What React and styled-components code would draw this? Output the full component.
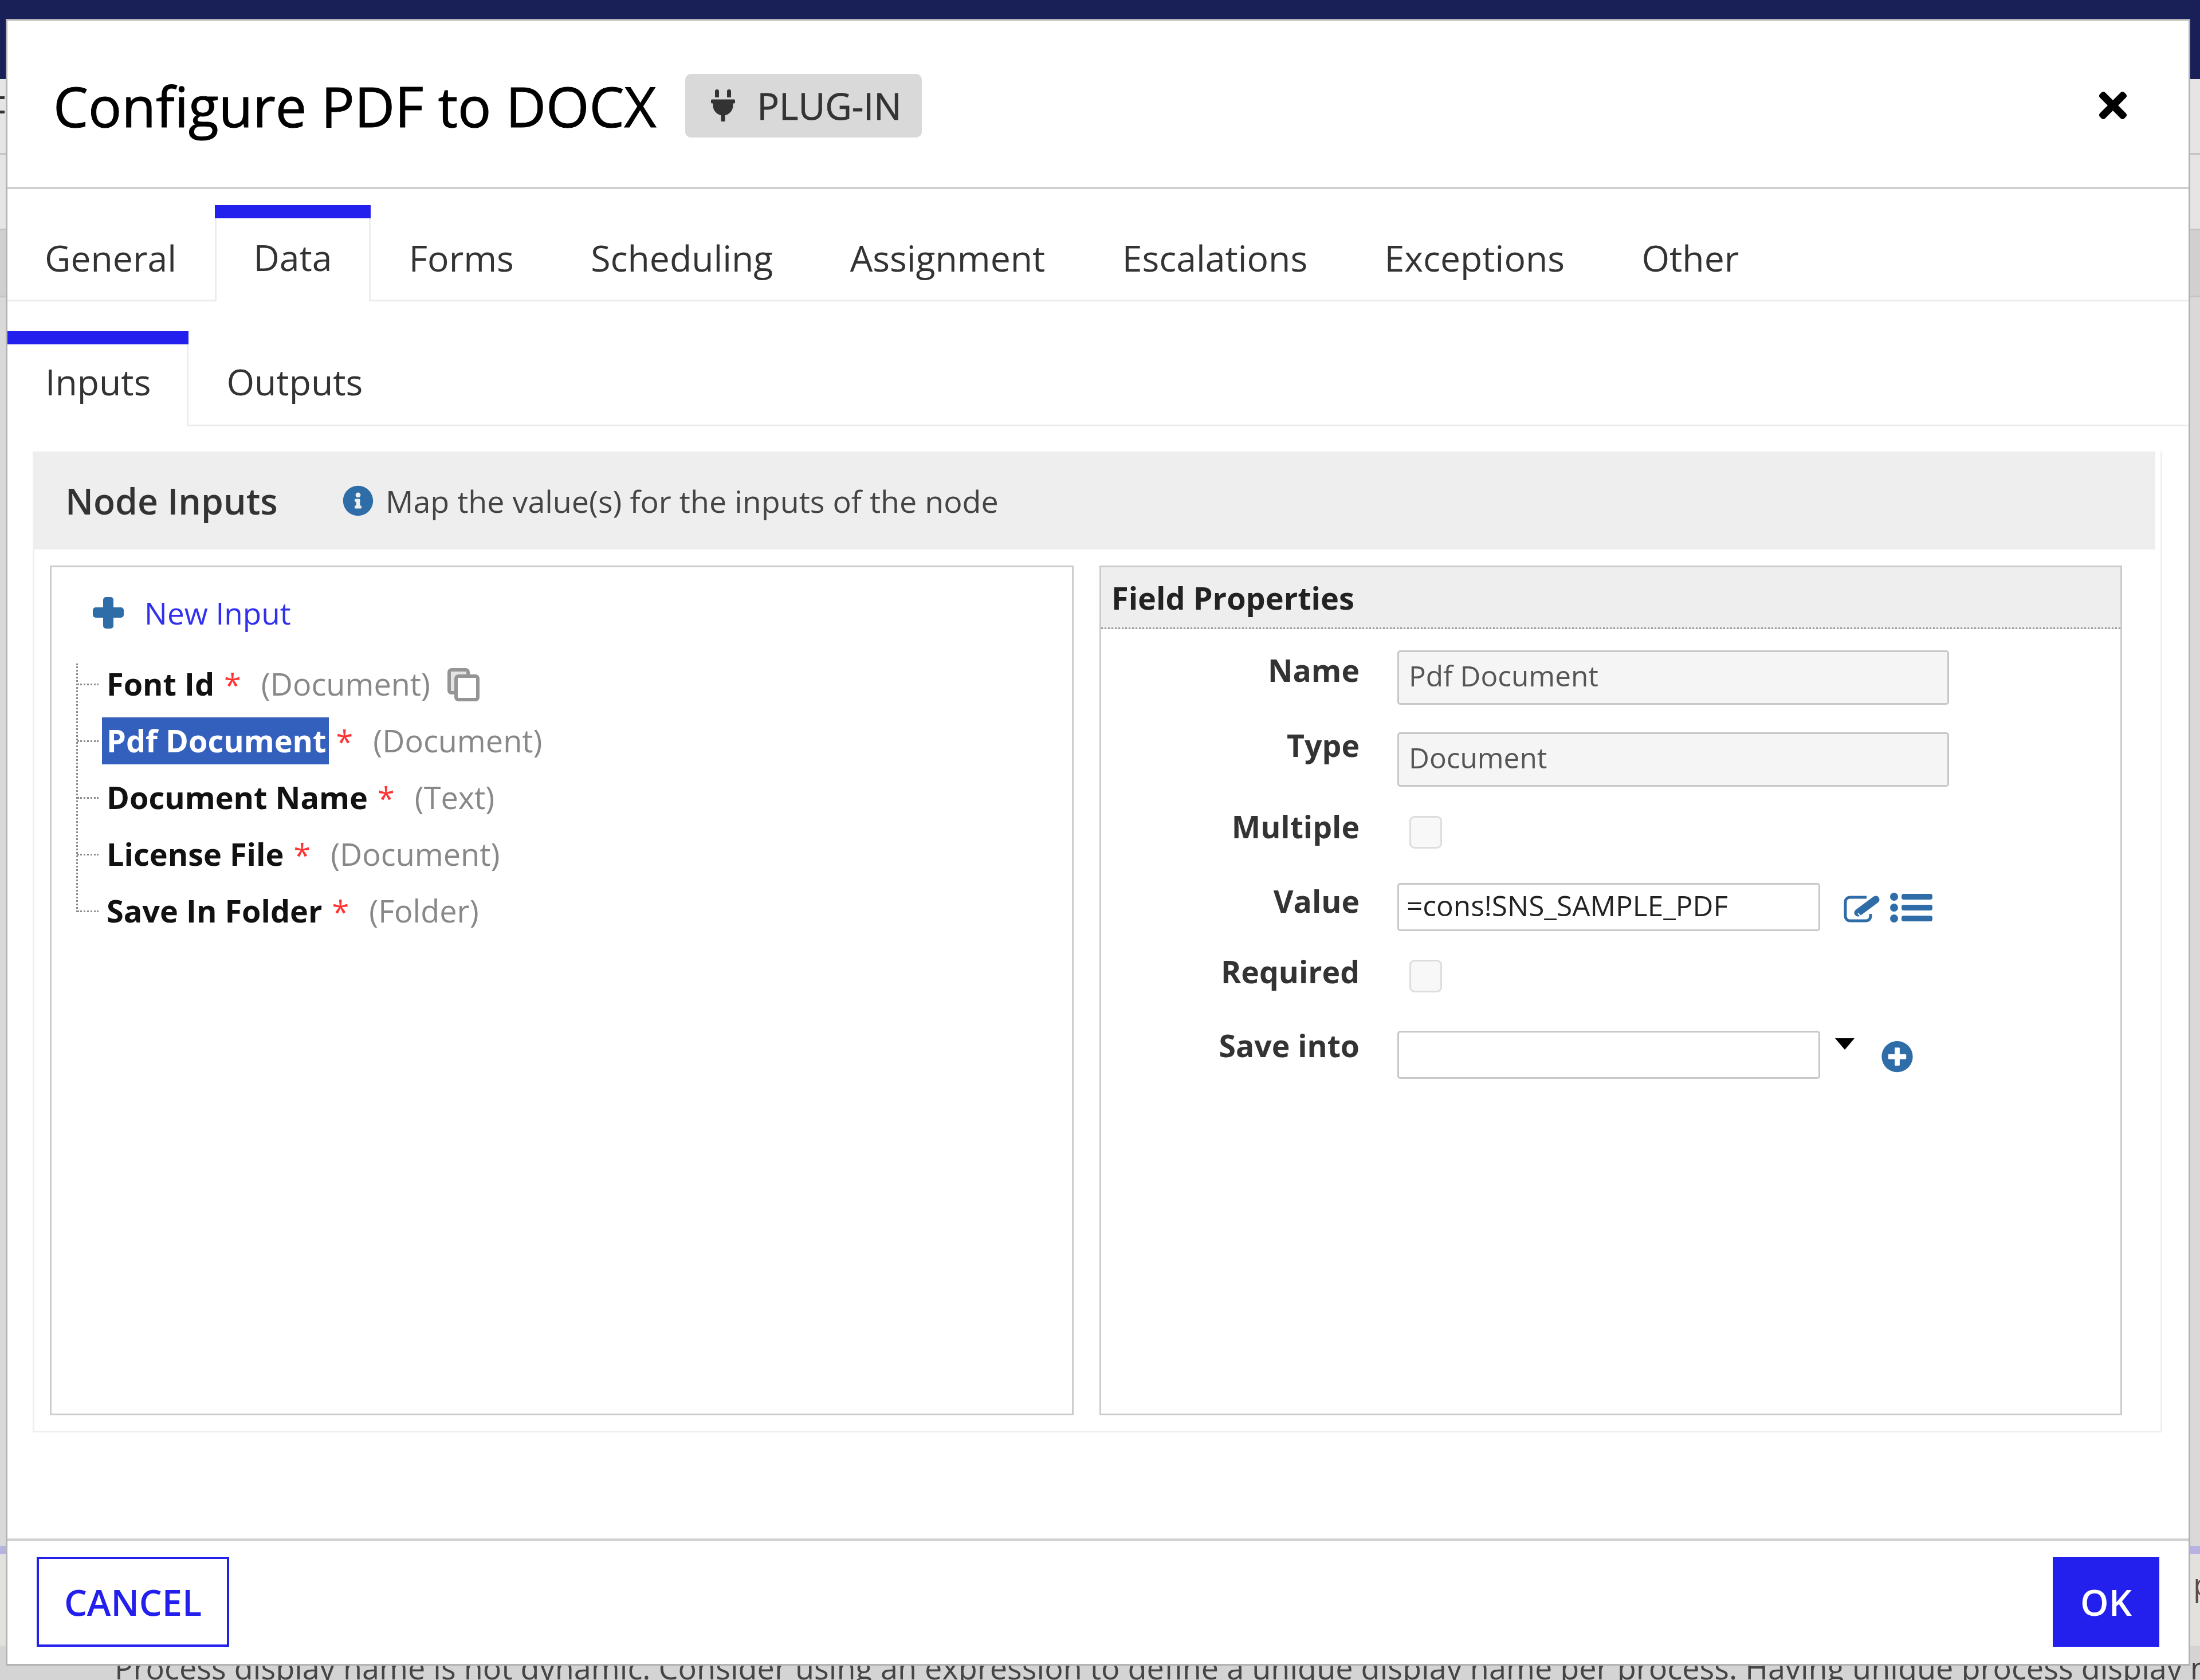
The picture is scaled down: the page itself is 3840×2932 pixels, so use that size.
import React from "react";
import styled, { createGlobalStyle } from "styled-components";
import { FaPlug, FaTimes, FaInfoCircle, FaPlusCircle } from "react-icons/fa";

const BLUE = "#2320ee";
const ICON = "#2e6da8";

const TABS = ["General", "Data", "Forms", "Scheduling", "Assignment", "Escalations", "Exceptions", "Other"];

const INPUTS = [
  { name: "Font Id", type: "(Document)", copy: true },
  { name: "Pdf Document", type: "(Document)", selected: true },
  { name: "Document Name", type: "(Text)" },
  { name: "License File", type: "(Document)" },
  { name: "Save In Folder", type: "(Folder)" },
];

function CopyIcon() {
  return (
    <CopySvg viewBox="0 0 56 58" stroke="#959595" strokeWidth="6">
      <path d="M36 13V7a4 4 0 0 0-4-4H7a4 4 0 0 0-4 4v32a4 4 0 0 0 4 4h6z" fill="#e4e4e4" />
      <rect x="15" y="14" width="38" height="41" rx="4" fill="#fff" />
    </CopySvg>
  );
}

function PlusIcon() {
  return (
    <PlusSvg viewBox="0 0 54 55" fill={ICON}>
      <rect x="18" y="0" width="18" height="55" rx="5" />
      <rect x="0" y="18" width="54" height="18" rx="5" />
    </PlusSvg>
  );
}

function EditIcon() {
  return (
    <EditSvg viewBox="0 0 65 48">
      <path
        d="M40 4H11a8 8 0 0 0-8 8v25a8 8 0 0 0 8 8h28a8 8 0 0 0 8-8V33"
        fill="none"
        stroke={ICON}
        strokeWidth="5"
      />
      <path d="M25 31 L56 8" stroke={ICON} strokeWidth="13" strokeLinecap="round" />
      <path d="M25 32 L31 38" stroke="#fff" strokeWidth="2" />
    </EditSvg>
  );
}

function ListIcon() {
  return (
    <ListSvg viewBox="0 0 74 52" fill={ICON}>
      <circle cx="7" cy="7" r="7" />
      <circle cx="7" cy="26" r="7" />
      <circle cx="7" cy="45" r="7" />
      <rect x="20" y="2" width="54" height="10" rx="4" />
      <rect x="20" y="21" width="54" height="10" rx="4" />
      <rect x="20" y="40" width="54" height="10" rx="4" />
    </ListSvg>
  );
}

export default function App() {
  return (
    <Page>
      <GlobalStyle />
      <TopBar />
      <Strip>
        <MenuDash />
        <MenuDash />
      </Strip>
      <Strip />
      <Strip $dim />
      <PageFill />
      <LavenderBar />
      <NoticeBand>process</NoticeBand>
      <BottomBand>
        Process display name is not dynamic. Consider using an expression to define a unique display name per process. Having unique process display name
      </BottomBand>

      <Modal>
        <Header>
          <TitleGroup>
            <Title>Configure PDF to DOCX</Title>
            <Badge>
              <FaPlug />
              PLUG-IN
            </Badge>
          </TitleGroup>
          <CloseIcon />
        </Header>

        <TabBar>
          {TABS.map((t) => (
            <Tab key={t} $active={t === "Data"}>
              {t}
            </Tab>
          ))}
        </TabBar>

        <SubTabBar>
          <SubTab $active>Inputs</SubTab>
          <SubTab>Outputs</SubTab>
        </SubTabBar>

        <Panel>
          <PanelHeader>
            <PanelTitle>Node Inputs</PanelTitle>
            <InfoIcon />
            <PanelHint>Map the value(s) for the inputs of the node</PanelHint>
          </PanelHeader>
          <PanelBody>
            <TreeBox>
              <NewInput>
                <PlusIcon />
                New Input
              </NewInput>
              <Tree>
                {INPUTS.map((row) => (
                  <TreeRow key={row.name}>
                    <Branch />
                    <NodeName $selected={row.selected}>{row.name}</NodeName>
                    <Star>*</Star>
                    <NodeType>{row.type}</NodeType>
                    {row.copy && <CopyIcon />}
                  </TreeRow>
                ))}
              </Tree>
            </TreeBox>

            <PropsBox>
              <PropsHeader>Field Properties</PropsHeader>
              <Field $top={37}>
                <FieldLabel $top={9}>Name</FieldLabel>
                <TextBox $disabled>Pdf Document</TextBox>
              </Field>
              <Field $top={48}>
                <FieldLabel $top={-3}>Type</FieldLabel>
                <TextBox $disabled>Document</TextBox>
              </Field>
              <Field $top={51}>
                <FieldLabel $top={-7}>Multiple</FieldLabel>
                <Check />
              </Field>
              <Field $top={60}>
                <FieldLabel $top={6}>Value</FieldLabel>
                <TextBox $short>=cons!SNS_SAMPLE_PDF</TextBox>
                <EditIcon />
                <ListIcon />
              </Field>
              <Field $top={50}>
                <FieldLabel $top={-5}>Required</FieldLabel>
                <Check />
              </Field>
              <Field $top={67}>
                <FieldLabel $top={0}>Save into</FieldLabel>
                <TextBox $short />
                <Caret />
                <AddIcon />
              </Field>
            </PropsBox>
          </PanelBody>
        </Panel>

        <Footer>
          <CancelButton>CANCEL</CancelButton>
          <OkButton>OK</OkButton>
        </Footer>
      </Modal>
    </Page>
  );
}

const GlobalStyle = createGlobalStyle`
  html, body {
    margin: 0;
    padding: 0;
  }
  body {
    font-family: "Open Sans", "Liberation Sans", sans-serif;
    overflow: hidden;
  }
`;

const Page = styled.div`
  position: relative;
  display: flex;
  flex-direction: column;
  width: 3840px;
  height: 2932px;
  overflow: hidden;
  background: #d9d9d9;
`;
const TopBar = styled.div`
  height: 138px;
  background: #191f57;
`;
const Strip = styled.div`
  box-sizing: border-box;
  height: ${(p) => (p.$dim ? 117 : 132)}px;
  padding-top: 30px;
  background: ${(p) => (p.$dim ? "#d0d0cf" : "#e5e5e5")};
  border-bottom: 3px solid #c4c4c4;
`;
const MenuDash = styled.div`
  width: 8px;
  height: 5px;
  margin-bottom: 20px;
  background: #333;
`;
const PageFill = styled.div`
  flex: 1;
`;
const LavenderBar = styled.div`
  height: 14px;
  background: #b6b2e2;
`;
const NoticeBand = styled.div`
  box-sizing: border-box;
  height: 160px;
  padding: 14px 0 0 3828px;
  background: #e2e1dd;
  color: #5a4a48;
  font-size: 54px;
  line-height: 76px;
  white-space: nowrap;
  overflow: hidden;
`;
const BottomBand = styled.div`
  height: 60px;
  padding-left: 200px;
  background: #d4d4d4;
  color: #444;
  font-size: 54px;
  line-height: 76px;
  white-space: nowrap;
  overflow: hidden;
`;

const Modal = styled.div`
  position: absolute;
  left: 10px;
  top: 33px;
  box-sizing: border-box;
  display: flex;
  flex-direction: column;
  width: 3813px;
  height: 2874px;
  background: #fff;
  border: 3px solid #b4b4b4;
`;

const Header = styled.div`
  box-sizing: border-box;
  flex: none;
  display: flex;
  align-items: center;
  justify-content: space-between;
  height: 294px;
  padding: 6px 103px 0 80px;
  border-bottom: 4px solid #d0d0d0;
`;
const TitleGroup = styled.div`
  display: flex;
  align-items: center;
  gap: 50px;
`;
const Title = styled.h1`
  margin: 0;
  color: #000;
  font-size: 97px;
  font-weight: 400;
  -webkit-text-stroke: 1px #000;
  line-height: 120px;
  white-space: nowrap;
`;
const Badge = styled.div`
  display: flex;
  align-items: center;
  gap: 38px;
  box-sizing: border-box;
  width: 413px;
  height: 111px;
  padding-left: 44px;
  background: #d9d9d9;
  border-radius: 10px;
  color: #333;
  font-size: 64px;
  -webkit-text-stroke: 0.8px #333;
  white-space: nowrap;
  svg {
    width: 44px;
    height: 56px;
  }
`;
const CloseIcon = styled(FaTimes)`
  width: 70px;
  height: 70px;
  margin-right: -6px;
  color: #000;
`;

const TabBar = styled.div`
  box-sizing: border-box;
  flex: none;
  display: flex;
  align-items: flex-end;
  height: 196px;
  border-bottom: 3px solid #ececec;
`;
const Tab = styled.div`
  box-sizing: border-box;
  height: ${(p) => (p.$active ? 168 : 165)}px;
  margin-bottom: ${(p) => (p.$active ? -3 : 0)}px;
  padding: ${(p) => (p.$active ? 23 : 47)}px 67.2px 0;
  color: #333;
  font-size: 62.5px;
  line-height: 90px;
  white-space: nowrap;
  background: #fff;
  border-top: ${(p) => (p.$active ? `23px solid ${BLUE}` : "none")};
  box-shadow: ${(p) => (p.$active ? "inset 3px 0 #ececec, inset -3px 0 #ececec" : "none")};
  &:first-child {
    padding-left: 65px;
  }
`;

const SubTabBar = styled.div`
  box-sizing: border-box;
  flex: none;
  display: flex;
  align-items: flex-end;
  height: 166px;
  margin-top: 52px;
  border-bottom: 3px solid #ececec;
`;
const SubTab = styled.div`
  box-sizing: border-box;
  height: ${(p) => (p.$active ? 166 : 163)}px;
  margin-bottom: ${(p) => (p.$active ? -3 : 0)}px;
  padding: ${(p) => (p.$active ? 20 : 43)}px 66px 0;
  color: #333;
  font-size: 62.5px;
  line-height: 90px;
  background: #fff;
  border-top: ${(p) => (p.$active ? `23px solid ${BLUE}` : "none")};
  box-shadow: ${(p) => (p.$active ? "inset -3px 0 #ececec" : "none")};
`;

const Panel = styled.div`
  box-sizing: border-box;
  flex: none;
  width: 3717px;
  height: 1712px;
  margin: 44px 0 0 44px;
  padding-right: 9px;
  border: 3px solid #efefef;
  border-top: none;
`;
const PanelHeader = styled.div`
  display: flex;
  align-items: center;
  height: 171px;
  padding-left: 54px;
  background: #eee;
`;
const PanelTitle = styled.div`
  width: 484px;
  color: #333;
  font-size: 62.5px;
  font-weight: 600;
  white-space: nowrap;
`;
const InfoIcon = styled(FaInfoCircle)`
  width: 54px;
  height: 54px;
  margin-right: 21px;
  color: ${ICON};
`;
const PanelHint = styled.div`
  color: #444;
  font-size: 53.8px;
  white-space: nowrap;
`;
const PanelBody = styled.div`
  display: flex;
  gap: 45px;
  margin-top: 28px;
  padding-left: 27px;
`;

const TreeBox = styled.div`
  box-sizing: border-box;
  width: 1787px;
  height: 1483px;
  padding: 52px 0 0 72px;
  border: 3px solid #ccc;
`;
const NewInput = styled.div`
  display: flex;
  align-items: center;
  gap: 36px;
  height: 55px;
  color: #3030ee;
  font-size: 53px;
`;
const PlusSvg = styled.svg`
  width: 54px;
  height: 55px;
`;
const Tree = styled.div`
  position: relative;
  margin: 48px 0 0 -29px;
  &::before {
    content: "";
    position: absolute;
    left: 0;
    top: 13px;
    bottom: 48px;
    border-left: 3px dotted #8a8a8a;
  }
`;
const TreeRow = styled.div`
  display: flex;
  align-items: center;
  height: 99px;
  white-space: nowrap;
`;
const Branch = styled.span`
  flex: none;
  width: 37px;
  margin: 0 6px 0 2px;
  border-top: 3px dotted #8a8a8a;
`;
const NodeName = styled.span`
  padding: 0 4px 0 8px;
  height: 82px;
  margin-top: -2px;
  line-height: 80px;
  color: ${(p) => (p.$selected ? "#fff" : "#111")};
  background: ${(p) => (p.$selected ? "#335fbd" : "transparent")};
  font-size: 54px;
  font-weight: 700;
`;
const Star = styled.span`
  margin-left: 13px;
  color: #f33;
  font-size: 54px;
`;
const NodeType = styled.span`
  margin-left: 35px;
  margin-top: -3px;
  color: #888;
  font-size: 54px;
`;
const CopySvg = styled.svg`
  width: 56px;
  height: 58px;
  margin-left: 30px;
`;

const PropsBox = styled.div`
  box-sizing: border-box;
  width: 1785px;
  height: 1483px;
  border: 3px solid #ccc;
`;
const PropsHeader = styled.div`
  box-sizing: border-box;
  height: 108px;
  padding-left: 18px;
  background: #eee;
  border-bottom: 3px dotted #999;
  color: #222;
  font-size: 54px;
  font-weight: 700;
  line-height: 106px;
`;
const Field = styled.div`
  display: flex;
  align-items: flex-start;
  margin-top: ${(p) => p.$top}px;
`;
const FieldLabel = styled.div`
  box-sizing: border-box;
  flex: none;
  width: 451px;
  margin: ${(p) => p.$top}px 66px 0 0;
  color: #333;
  font-size: 53.5px;
  font-weight: 700;
  line-height: 52px;
  text-align: right;
  white-space: nowrap;
`;
const TextBox = styled.div`
  box-sizing: border-box;
  flex: none;
  width: ${(p) => (p.$short ? 738 : 963)}px;
  height: ${(p) => (p.$short ? 84 : 95)}px;
  padding-left: ${(p) => (p.$disabled ? 17 : 13)}px;
  background: ${(p) => (p.$disabled ? "#f5f5f5" : "#fff")};
  border: 3px solid #c8c8c8;
  border-radius: 5px;
  color: ${(p) => (p.$disabled ? "#555" : "#222")};
  font-size: 49.5px;
  line-height: ${(p) => (p.$short ? 72 : 83)}px;
  white-space: nowrap;
`;
const Check = styled.div`
  box-sizing: border-box;
  width: 57px;
  height: 57px;
  margin-left: 21px;
  background: #f8f8f8;
  border: 3px solid #ddd;
  border-radius: 9px;
`;
const EditSvg = styled.svg`
  width: 65px;
  height: 48px;
  margin: 21px 16px 0 41px;
`;
const ListSvg = styled.svg`
  width: 74px;
  height: 52px;
  margin-top: 17px;
`;
const Caret = styled.div`
  width: 0;
  height: 0;
  margin: 13px 0 0 26px;
  border-left: 17px solid transparent;
  border-right: 17px solid transparent;
  border-top: 20px solid #000;
`;
const AddIcon = styled(FaPlusCircle)`
  width: 59px;
  height: 56px;
  margin: 17px 0 0 45px;
  color: ${ICON};
`;

const Footer = styled.div`
  box-sizing: border-box;
  flex: none;
  display: flex;
  justify-content: space-between;
  align-items: flex-start;
  height: 219px;
  margin-top: auto;
  padding: 28px 51px 0 51px;
  border-top: 4px solid #d0d0d0;
`;
const CancelButton = styled.div`
  box-sizing: border-box;
  width: 336px;
  height: 157px;
  background: #fff;
  border: 4px solid ${BLUE};
  color: ${BLUE};
  font-size: 63px;
  font-weight: 600;
  line-height: 149px;
  text-align: center;
`;
const OkButton = styled.div`
  width: 186px;
  height: 157px;
  background: ${BLUE};
  color: #fff;
  font-size: 63px;
  font-weight: 600;
  line-height: 157px;
  text-align: center;
`;
